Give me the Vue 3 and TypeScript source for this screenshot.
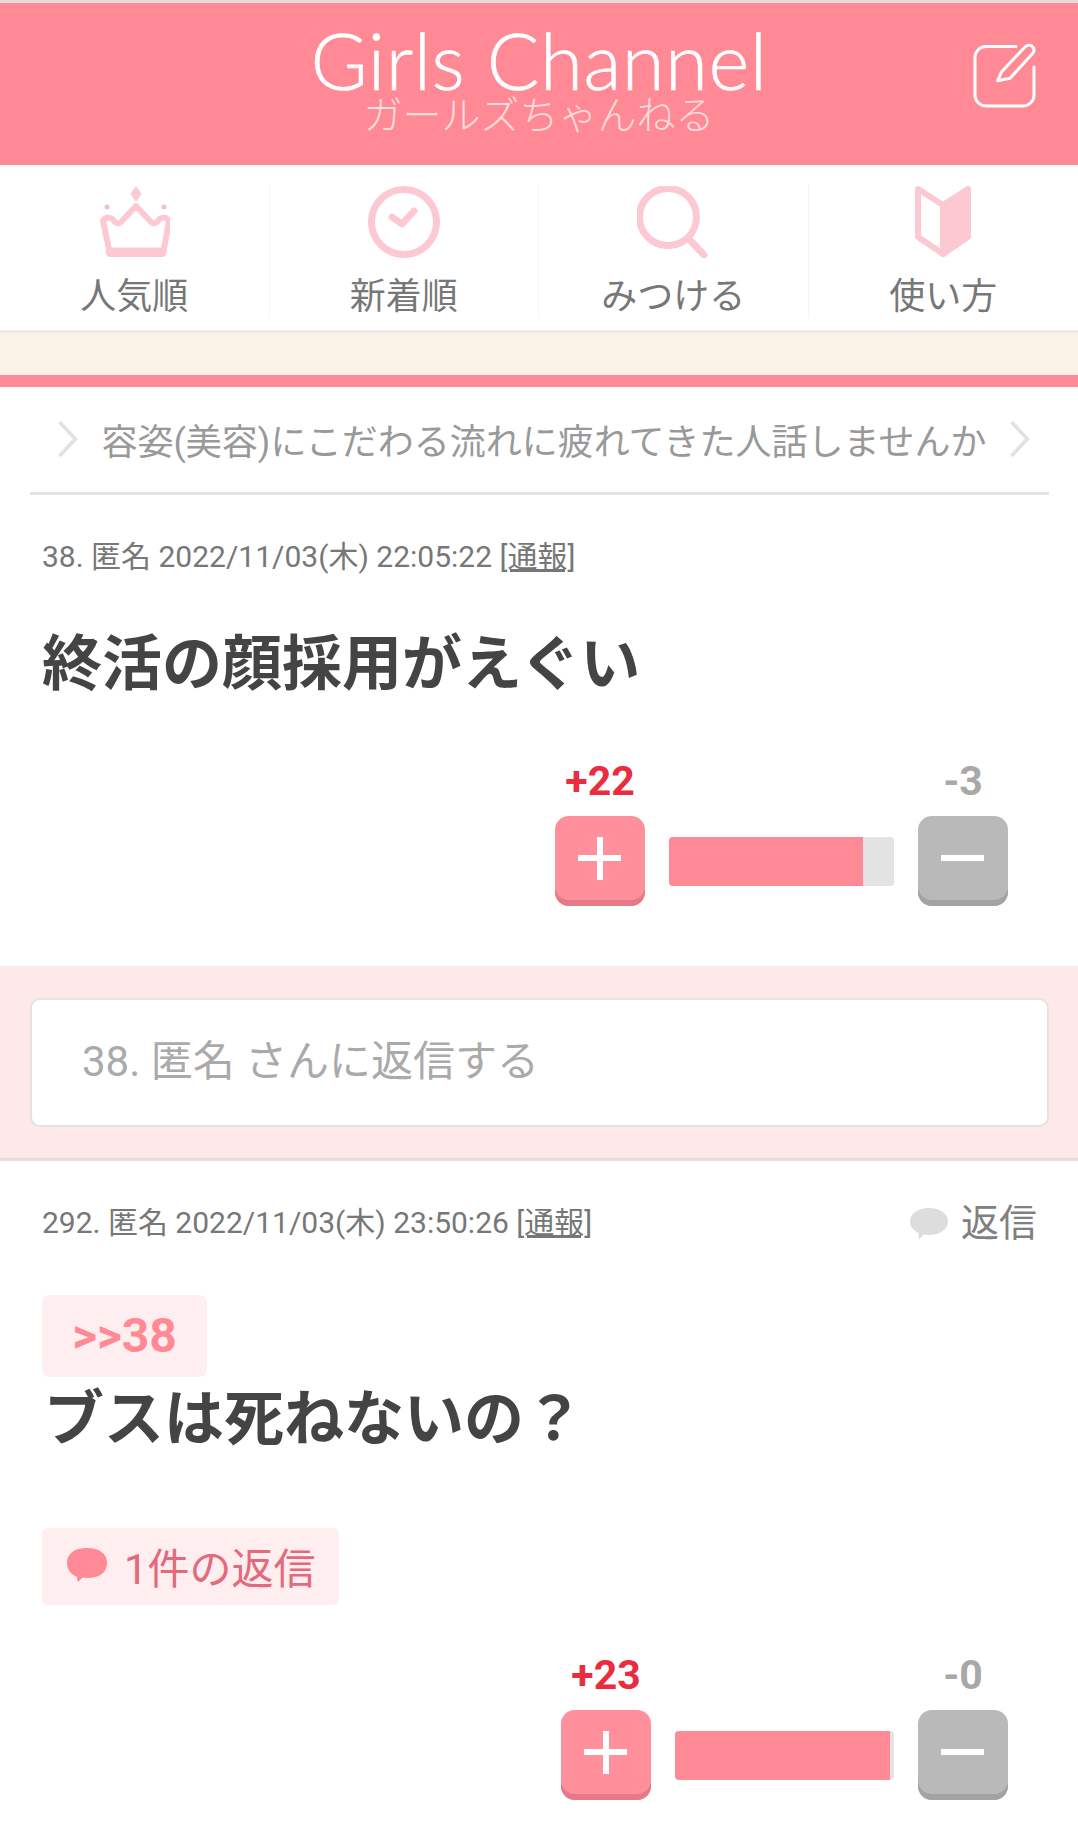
<script setup lang="ts">
import { ref } from "vue";

interface NavItem {
  label: string;
  icon: string;
}

const navItems = ref<NavItem[]>([
  { label: "人気順", icon: "crown" },
  { label: "新着順", icon: "clock" },
  { label: "みつける", icon: "search" },
  { label: "使い方", icon: "book" },
]);
</script>

<template>
  <div class="page">
    <header class="header">
      <div class="logo">
        <div class="logo-en">Girls Channel</div>
        <div class="logo-ja">ガールズちゃんねる</div>
      </div>
      <svg class="edit" viewBox="0 0 64 66" fill="none" stroke="#fff" stroke-width="3" stroke-linecap="round" stroke-linejoin="round">
        <path d="M43 3.500H13a11 11 0 0 0-11 11V52a11 11 0 0 0 11 11h37a11 11 0 0 0 11-11V24" />
        <path d="M24.700 37.700L28.700 28.700 52 4c2-2 5-2.500 7-.8 2.300 2 2.500 4.800.6 7.300L37 35.300z" />
      </svg>
    </header>

    <nav class="nav">
      <div v-for="item in navItems" :key="item.label" class="nav-item">
        <svg class="nav-icon" viewBox="0 0 72 72" fill="none" stroke="#fcc9d3" stroke-width="6" stroke-linecap="round" stroke-linejoin="round">
          <template v-if="item.icon === 'crown'">
            <path d="M38 0l5.500 8L38 16l-5.500-8z" fill="#fcc9d3" stroke="none" />
            <circle cx="9" cy="21" r="2.500" fill="#e9c4cc" stroke="none" />
            <circle cx="66" cy="21" r="2.500" fill="#e9c4cc" stroke="none" />
            <path d="M5 35c3-5 9-4 11 0 2 3 5 3 7 1l15-16 15 16c2 2 5 2 7-1 2-4 8-5 11 0l-6 33H12z" />
            <path d="M12 66h52" stroke-width="9" />
          </template>
          <template v-else-if="item.icon === 'clock'">
            <circle cx="36" cy="36" r="32.500" stroke-width="7" />
            <path d="M24 31l10 7 12-13" stroke-width="7" />
          </template>
          <template v-else-if="item.icon === 'search'">
            <circle cx="31" cy="31" r="28.500" stroke-width="7" />
            <path d="M51 52l16 17" stroke-width="7" />
          </template>
          <template v-else>
            <path d="M36 68L61 51V3L36 19z" fill="#fcc9d3" />
            <path d="M36 68L11 51V3l25 16z" />
          </template>
        </svg>
        <span class="nav-label">{{ item.label }}</span>
      </div>
    </nav>

    <div class="cream"></div>
    <div class="pink-line"></div>

    <div class="topic-title">
      <svg class="chev" viewBox="0 0 20 36" fill="none" stroke="#e2e2e2" stroke-width="3.500"><path d="M2 2l15 16L2 34" /></svg>
      <span class="topic-text">容姿(美容)にこだわる流れに疲れてきた人話しませんか</span>
      <svg class="chev" viewBox="0 0 20 36" fill="none" stroke="#e2e2e2" stroke-width="3.500"><path d="M2 2l15 16L2 34" /></svg>
    </div>

    <section class="post first">
      <div class="meta">
        <span>38. 匿名 2022/11/03(木) 22:05:22 <u>[通報]</u></span>
      </div>
      <div class="body-text first-text">終活の顔採用がえぐい</div>
      <div class="vote first-vote">
        <div class="vote-side">
          <span class="score plus">+22</span>
          <div class="btn btn-plus"><i class="bar-h"></i><i class="bar-v"></i></div>
        </div>
        <div class="meter" style="width: 225px"><div class="meter-fill" style="width: 86%"></div></div>
        <div class="vote-side">
          <span class="score minus">-3</span>
          <div class="btn btn-minus"><i class="bar-h"></i></div>
        </div>
      </div>
    </section>

    <div class="reply-box">
      <div class="reply-input">38. 匿名 さんに返信する</div>
    </div>

    <section class="post second">
      <div class="meta">
        <span>292. 匿名 2022/11/03(木) 23:50:26 <u>[通報]</u></span>
        <span class="reply-link">
          <svg class="bubble" viewBox="0 0 40 33"><path d="M20 1c11 0 19 5.500 19 13.500S31 28 20 28c-2 0-4-.2-5.500-.5L10 32.500l-.5-6.800C4 23.500 1 19.500 1 14.500 1 6.500 9 1 20 1z" fill="#ddd" /></svg>
          返信
        </span>
      </div>
      <div class="anchor">&gt;&gt;38</div>
      <div class="body-text second-text">ブスは死ねないの？</div>
      <div class="replies">
        <svg class="bubble-pink" viewBox="0 0 42 36"><path d="M21 1c13 0 20 6 20 15s-7 15-20 15c-1.500 0-3-.1-4.500-.4L12 35l-1.500-5.500C5 27.500 1 22.500 1 16 1 7 8 1 21 1z" fill="#ff8a95" /></svg>
        <span>1件の返信</span>
      </div>
      <div class="vote second-vote">
        <div class="vote-side">
          <span class="score plus">+23</span>
          <div class="btn btn-plus"><i class="bar-h"></i><i class="bar-v"></i></div>
        </div>
        <div class="meter" style="width: 219px"><div class="meter-fill" style="width: 98%"></div></div>
        <div class="vote-side">
          <span class="score minus">-0</span>
          <div class="btn btn-minus"><i class="bar-h"></i></div>
        </div>
      </div>
    </section>
  </div>
</template>

<style scoped>
.page {
  width: 1078px;
  height: 1830px;
  overflow: hidden;
  background: #fff;
  font-family: Roboto, "Noto Sans CJK JP", sans-serif;
  color: #777;
}
.header {
  position: relative;
  box-sizing: border-box;
  height: 165px;
  border-top: 3px solid #e3dcd8;
  background: #ff8a95;
  display: flex;
  justify-content: center;
  padding-top: 21px;
}
.logo {
  text-align: center;
  color: #fff;
}
.logo-en {
  font-family: Lato, sans-serif;
  font-weight: 300;
  font-size: 78px;
  line-height: 72px;
  letter-spacing: 0.5px;
  -webkit-text-stroke: 0.6px #fff;
}
.logo-ja {
  font-family: "Noto Sans CJK JP", sans-serif;
  font-weight: 300;
  font-size: 39px;
  line-height: 40px;
  margin-top: -4px;
  color: #ffdcdc;
}
.edit {
  position: absolute;
  left: 973px;
  top: 40px;
  width: 64px;
  height: 66px;
}
.nav {
  display: grid;
  grid-template-columns: repeat(4, 1fr);
  height: 168px;
  padding: 20px 0 15px;
  box-sizing: border-box;
  border-bottom: 3px solid #eceaea;
}
.nav-item {
  display: flex;
  flex-direction: column;
  align-items: center;
  border-right: 1px solid #f4f4f4;
}
.nav-item:last-child {
  border-right: none;
}
.nav-icon {
  width: 72px;
  height: 72px;
  margin-top: 1px;
}
.nav-label {
  font-size: 36px;
  line-height: 42px;
  margin-top: 18px;
  color: #777;
}
.cream {
  height: 42px;
  background: #f8f2e7;
}
.pink-line {
  height: 12px;
  background: #ff8a95;
}
.topic-title {
  margin: 0 29px 0 30px;
  height: 108px;
  border-bottom: 3px solid #e3e3e3;
  box-sizing: border-box;
  display: flex;
  align-items: center;
  justify-content: space-between;
  padding: 0 18px 2px 27px;
}
.chev {
  width: 22px;
  height: 38px;
}
.topic-text {
  font-size: 36px;
  color: #999;
  white-space: nowrap;
}
.post {
  padding: 0 42px;
}
.meta {
  display: flex;
  justify-content: space-between;
  align-items: center;
  font-size: 30px;
  line-height: 40px;
  color: #777;
}
.first {
  height: 471px;
  padding-top: 42px;
  box-sizing: border-box;
}
.body-text {
  font-weight: 700;
  color: #444;
  white-space: nowrap;
}
.first-text {
  font-size: 60px;
  line-height: 80px;
  margin-top: 48px;
}
.vote {
  display: flex;
  justify-content: flex-end;
  align-items: flex-end;
  gap: 24px;
  padding-right: 28px;
}
.first-vote {
  margin-top: 55px;
}
.vote-side {
  display: flex;
  flex-direction: column;
  align-items: center;
  width: 90px;
}
.score {
  font-size: 41px;
  font-weight: 700;
  line-height: 42px;
  margin-bottom: 14px;
}
.plus {
  color: #e92d3e;
}
.minus {
  color: #a8a8a8;
}
.btn {
  position: relative;
  box-sizing: border-box;
  width: 90px;
  height: 90px;
  border-radius: 14px;
}
.btn-plus {
  background: #ff8f9b;
  box-shadow: inset 0 -6px 0 #e47a87;
}
.btn-minus {
  background: #b9b9b9;
  box-shadow: inset 0 -6px 0 #a3a3a3;
}
.bar-h {
  position: absolute;
  left: 23px;
  top: 39px;
  width: 43px;
  height: 6px;
  background: #fff;
}
.bar-v {
  position: absolute;
  left: 42px;
  top: 21px;
  width: 6px;
  height: 43px;
  background: #fff;
}
.meter {
  height: 49px;
  background: #e3e3e3;
  border-radius: 4px;
  overflow: hidden;
  margin-bottom: 20px;
}
.meter-fill {
  height: 100%;
  background: #ff8a95;
}
.reply-box {
  box-sizing: border-box;
  height: 195px;
  padding: 32px 29px 0 30px;
  background: #fde8ea;
  border-bottom: 3px solid #e4dcdd;
}
.reply-input {
  box-sizing: border-box;
  height: 129px;
  border: 2px solid #e3e3e3;
  border-radius: 10px;
  background: #fff;
  padding: 0 50px 10px;
  display: flex;
  align-items: center;
  font-size: 42px;
  color: #aaa;
}
.second {
  padding-top: 42px;
  position: relative;
}
.reply-link {
  display: flex;
  align-items: center;
  gap: 12px;
  font-size: 38px;
  color: #808080;
  margin-right: -1px;
}
.bubble {
  width: 40px;
  height: 33px;
}
.anchor {
  display: inline-block;
  margin-top: 52px;
  width: 165px;
  height: 82px;
  line-height: 82px;
  text-align: center;
  border-radius: 8px;
  background: #ffeef0;
  color: #ff8a95;
  font-size: 48px;
  font-weight: 700;
}
.second-text {
  font-size: 60px;
  line-height: 80px;
  margin-top: 3px;
  margin-left: 2px;
}
.replies {
  display: flex;
  align-items: center;
  gap: 16px;
  width: 297px;
  box-sizing: border-box;
  height: 77px;
  margin-top: 68px;
  padding: 0 0 3px 24px;
  background: #ffeef0;
  border-radius: 6px;
  font-size: 42px;
  color: #e26a7c;
}
.bubble-pink {
  width: 42px;
  height: 36px;
}
.second-vote {
  margin-top: 49px;
}
</style>
